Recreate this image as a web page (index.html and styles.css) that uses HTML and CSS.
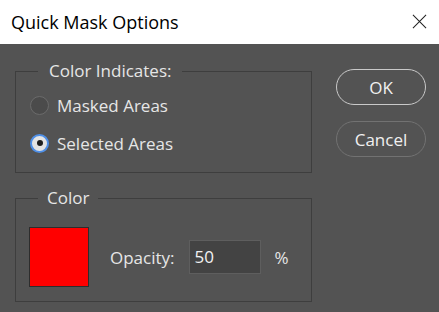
FILE: index.html
```html
<!DOCTYPE html>
<html>
<head>
<meta charset="utf-8">
<link rel="stylesheet" href="styles.css">
</head>
<body>
<div class="dialog">
  <div class="titlebar">
    <span class="title">Quick Mask Options</span>
    <svg class="close" width="16" height="16" viewBox="0 0 16 16"><path d="M1 1 L15 15 M15 1 L1 15" stroke="#222" stroke-width="1.1" fill="none"/></svg>
  </div>
  <div class="content">
    <div class="left">
      <fieldset class="group group-ind">
        <legend>Color Indicates:</legend>
        <label class="radio-row"><span class="radio"></span><span>Masked Areas</span></label>
        <label class="radio-row"><span class="radio checked"></span><span>Selected Areas</span></label>
      </fieldset>
      <fieldset class="group group-color">
        <legend>Color</legend>
        <div class="color-row">
          <div class="swatch"></div>
          <span class="op-label">Opacity:</span>
          <div class="op-input">50</div>
          <span class="pct">%</span>
        </div>
      </fieldset>
    </div>
    <div class="buttons">
      <div class="btn btn-ok">OK</div>
      <div class="btn btn-cancel">Cancel</div>
    </div>
  </div>
</div>
</body>
</html>
```
FILE: styles.css
```css
html, body { margin: 0; padding: 0; }
body {
  width: 439px; height: 312px; overflow: hidden;
  background: #535353;
  font-family: "Open Sans", "Noto Sans", sans-serif;
}
.dialog { width: 439px; height: 312px; display: flex; flex-direction: column; }
.titlebar {
  height: 44px; background: #fff; display: flex; align-items: center;
  justify-content: space-between; padding: 0 12px 0 11px; flex: none;
}
.title { font-size: 18px; color: #000; }
.close { width: 15px; height: 15px; margin-top: -2px; }
.content { flex: 1; display: flex; padding: 0 0 0 15px; }
.left { width: 297px; display: flex; flex-direction: column; }
.group {
  margin: 0; padding: 0; border: 1px solid #3e3e3e; box-sizing: border-box;
  color: #e6e6e6; font-size: 17px;
}
.group legend { line-height: 20px; padding: 0 11px; }
.group-ind { margin-top: 17px; height: 112px; padding: 0 0 0 14px; }
.group-ind legend { margin-left: 8px; }
.radio-row { display: flex; align-items: center; gap: 8px; height: 38px; }
.radio-row:first-of-type { margin-top: 5px; }
.radio {
  width: 19px; height: 19px; border-radius: 50%; box-sizing: border-box;
  border: 1px solid #6b6b6b; background: #4b4b4b; flex: none;
}
.radio.checked {
  border: 2px solid #4f8fe6; background: #e4e4e4; position: relative;
}
.radio.checked::after {
  content: ""; position: absolute; left: 4.5px; top: 4.5px; width: 6px; height: 6px;
  border-radius: 50%; background: #1e1e1e;
}
.group-color { margin-top: 15px; height: 114px; padding: 0 0 0 13px; }
.group-color legend { margin-left: 9px; padding: 0 9px; }
.color-row { display: flex; align-items: center; margin-top: 19px; }
.swatch { width: 58px; height: 58px; background: #ff0000; border: 1px solid #2d2d2d; flex: none; }
.op-label { margin-left: 21px; }
.op-input {
  margin-left: 14px; width: 70px; height: 32px; box-sizing: content-box;
  background: #434343; border: 1px solid #5e5e5e; color: #f2f2f2;
  line-height: 32px; text-indent: 5px;
}
.pct { margin-left: 14px; }
.buttons { display: flex; flex-direction: column; gap: 16px; margin: 25px 0 0 24px; }
.btn {
  width: 90px; height: 36px; box-sizing: border-box; border-radius: 18px;
  display: flex; align-items: center; justify-content: center;
  color: #f0f0f0; font-size: 17px;
}
.btn-ok { border: 1px solid #c9c9c9; }
.btn-cancel { border: 1px solid #727272; }
```
